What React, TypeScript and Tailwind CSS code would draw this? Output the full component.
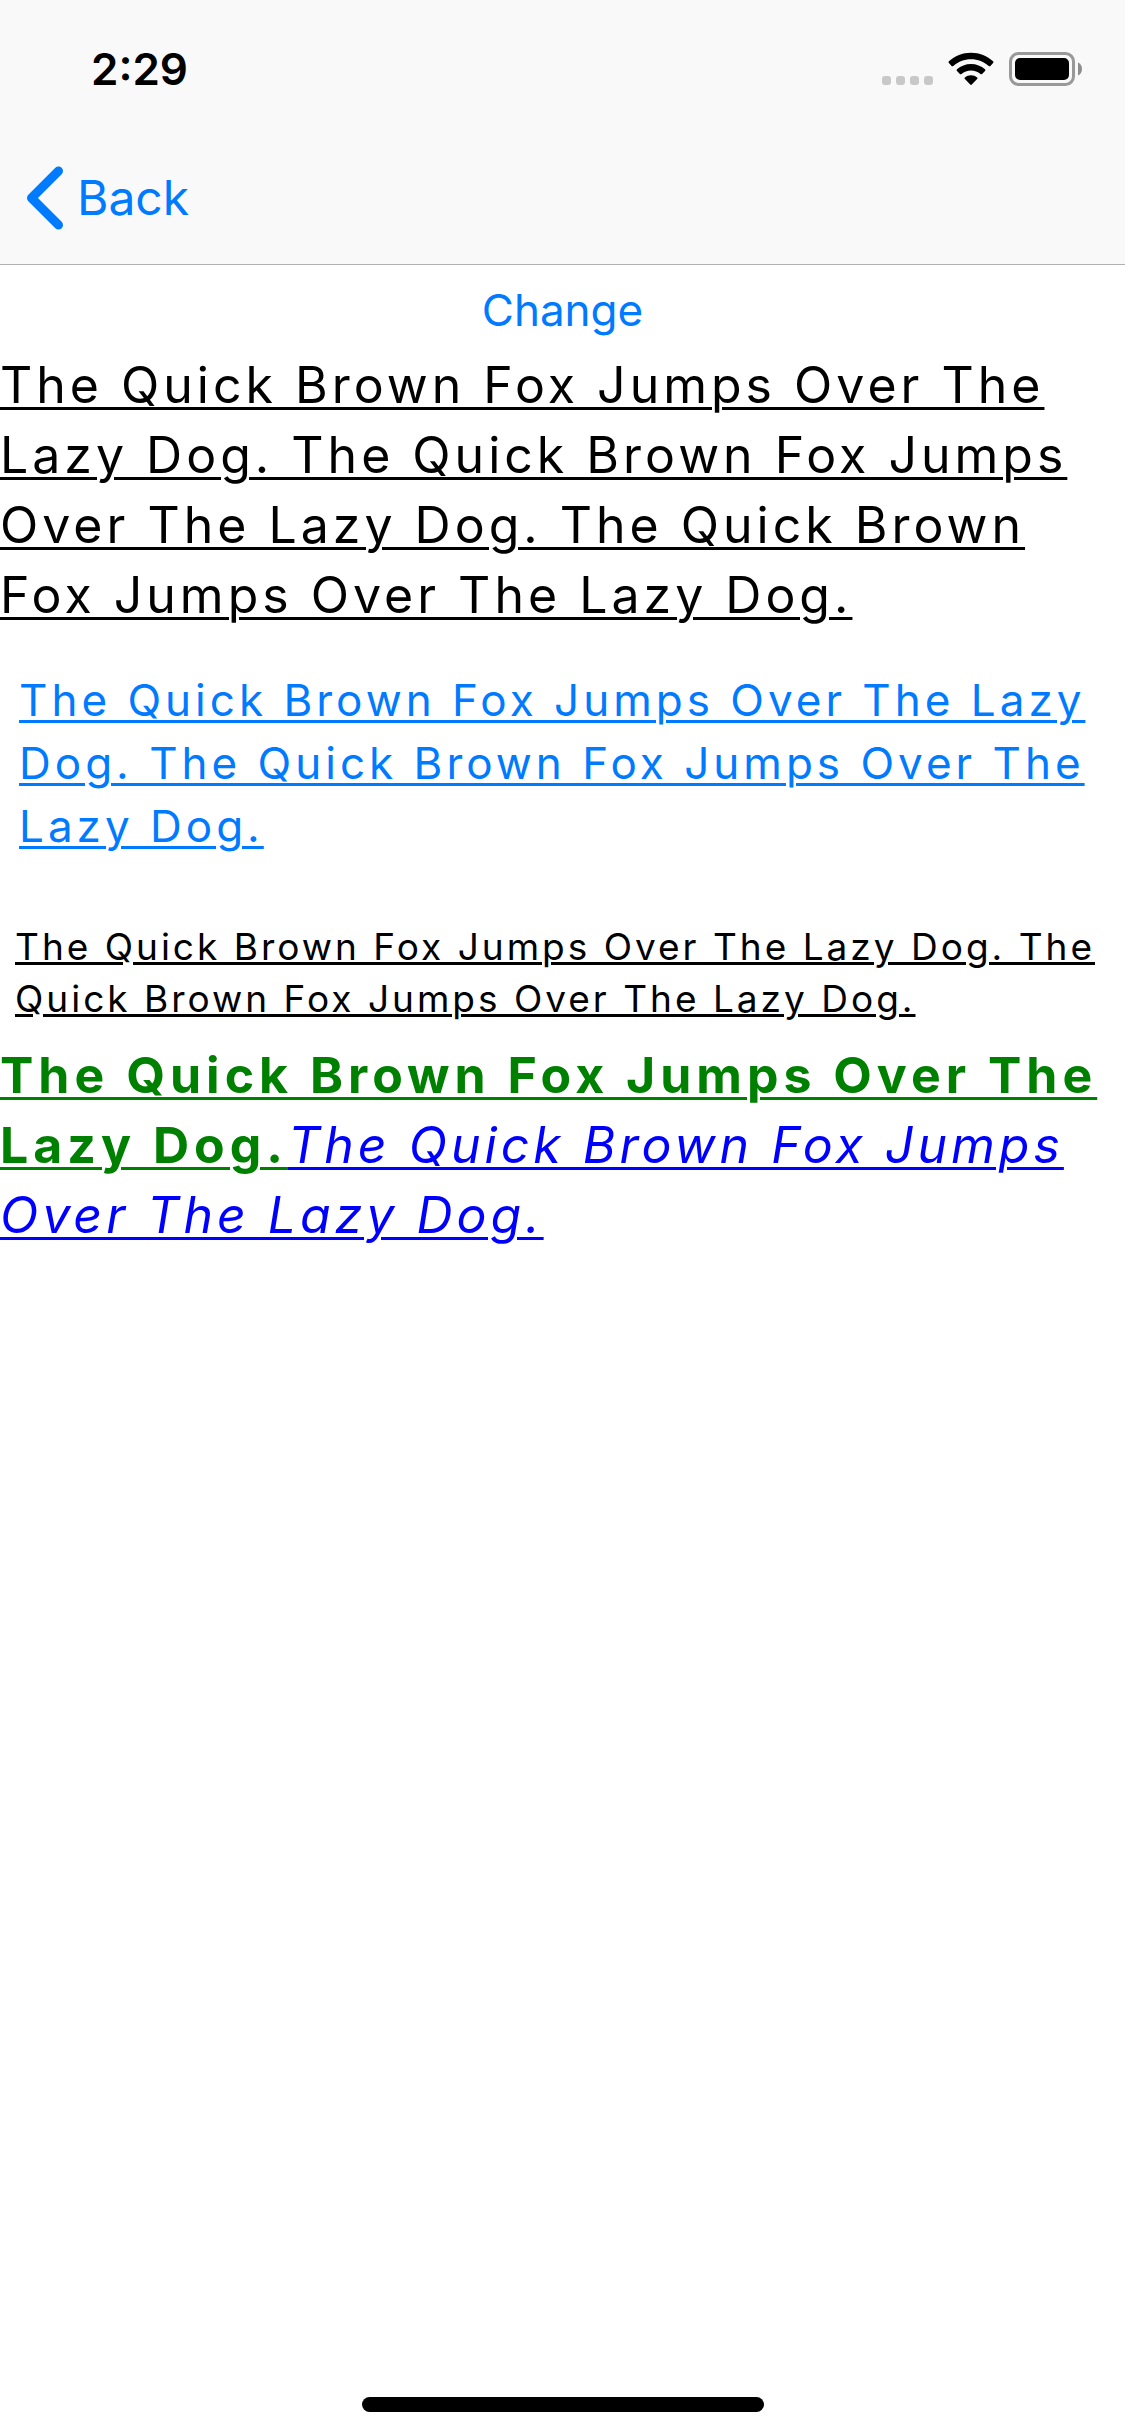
import React from "react";

const SENTENCE = "The Quick Brown Fox Jumps Over The Lazy Dog.";
const TWO_SENTENCES = `${SENTENCE} ${SENTENCE}`;
const THREE_SENTENCES = `${SENTENCE} ${SENTENCE} ${SENTENCE}`;

function StatusBar() {
  return (
    <div className="flex h-[132px] items-center justify-between pt-1 pr-[43px] pl-[91px]">
      <time className="pt-[2px] text-[44px] leading-[54px] font-semibold text-black">2:29</time>
      <div className="flex items-center gap-[15px] pt-[2px]">
        <svg width="51" height="34" viewBox="0 0 51 34" fill="#c8c8c8" aria-label="No signal" role="img">
          <rect x="0" y="24" width="9" height="9" rx="3" />
          <rect x="14" y="24" width="9" height="9" rx="3" />
          <rect x="28" y="24" width="9" height="9" rx="3" />
          <rect x="42" y="24" width="9" height="9" rx="3" />
        </svg>
        <svg width="46" height="34" viewBox="0 0 46 34" fill="#000" aria-label="Wi-Fi" role="img">
          <path d="M23 0.7C14.500 0.700 6.700 4 0.900 9.300C0.400 9.800 0.400 10.500 0.900 11L3.600 13.900C4.100 14.400 4.800 14.400 5.300 13.900C10 9.700 16.200 7.200 23 7.200C29.800 7.200 36 9.700 40.700 13.900C41.200 14.400 41.900 14.400 42.400 13.900L45.100 11C45.600 10.500 45.600 9.800 45.100 9.300C39.300 4 31.500 0.700 23 0.700Z" />
          <path d="M23 11.900C17.700 11.900 12.800 13.900 9 17.200C8.500 17.700 8.500 18.400 9 18.900L11.900 21.900C12.400 22.400 13 22.400 13.500 22C16.100 19.800 19.400 18.600 23 18.600C26.600 18.600 29.900 19.800 32.500 22C33 22.400 33.600 22.400 34.100 21.900L37 18.900C37.500 18.400 37.500 17.700 37 17.200C33.200 13.900 28.300 11.900 23 11.900Z" />
          <path d="M23 23.300C20.700 23.300 18.600 24.100 16.900 25.400C16.400 25.800 16.400 26.500 16.900 27L22.200 32.500C22.700 33 23.300 33 23.800 32.500L29.100 27C29.600 26.500 29.600 25.800 29.100 25.400C27.400 24.100 25.300 23.300 23 23.300Z" />
        </svg>
        <svg width="73" height="34" viewBox="0 0 73 34" aria-label="Battery full" role="img">
          <rect x="1.500" y="1.500" width="63" height="31" rx="8" fill="none" stroke="#999" strokeWidth="3" />
          <rect x="6" y="6" width="54" height="22" rx="5" fill="#000" />
          <path d="M69 10.500C71.500 11.500 73 14 73 17C73 20 71.500 22.500 69 23.500Z" fill="#8e8e8e" />
        </svg>
      </div>
    </div>
  );
}

function NavBar() {
  return (
    <nav className="flex h-[132px] items-center px-[26px]">
      <button type="button" className="flex items-center gap-[14px] text-[48px] leading-[60px] text-[#007aff]">
        <svg width="37" height="64" viewBox="0 0 37 64" fill="none" stroke="currentColor" strokeWidth="9" strokeLinecap="round" strokeLinejoin="round" aria-hidden="true">
          <path d="M32.500 5L5.500 32L32.500 59" />
        </svg>
        Back
      </button>
    </nav>
  );
}

export default function App() {
  return (
    <div className="flex min-h-screen flex-col bg-white font-['Inter','Liberation_Sans',sans-serif] text-black">
      <header className="border-b border-[#b0b0b0] bg-[#f9f9f9]">
        <StatusBar />
        <NavBar />
      </header>
      <main className="flex flex-1 flex-col">
        <button type="button" className="h-[85px] pt-1 text-[44px] leading-[54px] text-[#007aff]">
          Change
        </button>
        <p className="text-[50px] leading-[70px] tracking-[4px] underline decoration-[3px] underline-offset-4">
          {THREE_SENTENCES}
        </p>
        <button
          type="button"
          className="mt-[39px] px-[19px] text-left text-[44px] leading-[63px] tracking-[4px] text-[#007aff] underline decoration-[3px] underline-offset-4"
        >
          {TWO_SENTENCES}
        </button>
        <p className="mt-[63px] px-[15px] text-[37px] leading-[52px] tracking-[3px] underline decoration-[3px] underline-offset-2">
          {TWO_SENTENCES}
        </p>
        <p className="mt-[15px] text-[50px] leading-[70px]">
          <strong className="font-bold tracking-[5px] text-[#008000] underline decoration-[3px] underline-offset-4">{SENTENCE}</strong>
          <em className="tracking-[4px] text-[#0000ff] italic underline decoration-[3px] underline-offset-4">{SENTENCE}</em>
        </p>
      </main>
      <footer className="flex justify-center pb-6">
        <div className="h-[15px] w-[402px] rounded-full bg-black" />
      </footer>
    </div>
  );
}
